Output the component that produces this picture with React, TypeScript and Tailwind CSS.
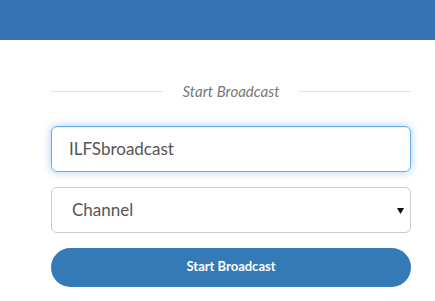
export default function App() {
  return (
    <div className="min-h-[301px] w-[435px] bg-white" style={{ fontFamily: "Lato, 'Open Sans', sans-serif" }}>
      <header className="h-10 bg-[#3773b4]" />

      <div className="ml-[51px] w-[360px] pt-[40px]">
        <div className="flex items-center gap-5">
          <div className="h-px flex-1 bg-[#e3e3e3]" />
          <span className="text-[15px] italic text-[#777]">Start Broadcast</span>
          <div className="h-px flex-1 bg-[#e3e3e3]" />
        </div>

        <input
          type="text"
          defaultValue="ILFSbroadcast"
          className="mt-[23px] block h-[46px] w-full rounded-md border border-[#66afe9] px-[17px] text-[17px] text-[#555] shadow-[inset_0_1px_1px_rgba(0,0,0,0.075),0_0_8px_rgba(102,175,233,0.6)] outline-none"
        />

        <div className="relative mt-[15px]">
          <select className="block h-[46px] w-full appearance-none rounded-md border border-[#ccc] bg-white px-5 text-[17px] text-[#555] outline-none">
            <option>Channel</option>
          </select>
          <svg className="pointer-events-none absolute right-[7px] top-[21px]" width="7" height="6" viewBox="0 0 7 6">
            <path d="M0 0h7L3.5 6z" fill="#111" />
          </svg>
        </div>

        <button className="mt-[15px] h-[39px] w-full rounded-full bg-[#337ab7] text-[13px] font-bold text-white">
          Start Broadcast
        </button>
      </div>
    </div>
  );
}
